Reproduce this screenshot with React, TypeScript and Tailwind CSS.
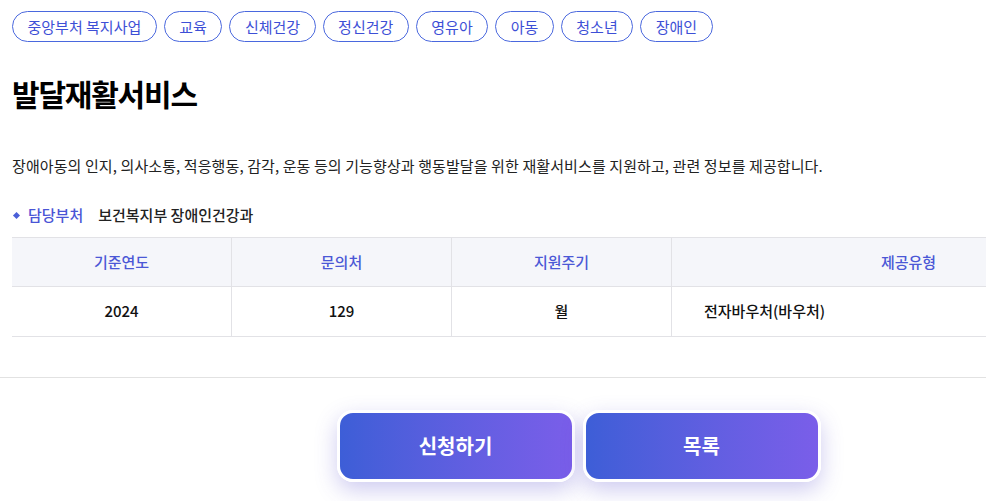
import React from 'react';

const tags = ['중앙부처 복지사업', '교육', '신체건강', '정신건강', '영유아', '아동', '청소년', '장애인'];

const columns = [
    { head: '기준연도', value: '2024', width: 'w-[220px]', align: 'text-center' },
    { head: '문의처', value: '129', width: 'w-[220px]', align: 'text-center' },
    { head: '지원주기', value: '월', width: 'w-[220px]', align: 'text-center' },
    { head: '제공유형', value: '전자바우처(바우처)', width: 'flex-1', align: 'text-left pl-[32px]' },
];

const App = () => {
    return (
        <div
            className="w-full min-h-screen overflow-hidden bg-white text-[#222]"
            style={{ fontFamily: '"Noto Sans CJK KR", "Noto Sans", sans-serif' }}
        >
            <div className="w-[1157px]">
                {/* Tags */}
                <div className="flex gap-[7px] px-[12px] pt-[11px]">
                    {tags.map((tag) => (
                        <span
                            key={tag}
                            className="h-[31px] px-[14.5px] flex items-center rounded-full border border-[#4a68de] text-[15px] text-[#3d4fd6] leading-none"
                        >
                            {tag}
                        </span>
                    ))}
                </div>

                {/* Title */}
                <h1 className="mt-[31px] px-[12px] h-[40px] flex items-center text-[30px] font-bold text-black tracking-[-1.2px]">
                    발달재활서비스
                </h1>

                {/* Description */}
                <p className="mt-[41px] px-[12px] h-[24px] flex items-center text-[15px] text-[#222] tracking-[0.1px]">
                    장애아동의 인지, 의사소통, 적응행동, 감각, 운동 등의 기능향상과 행동발달을 위한 재활서비스를 지원하고, 관련 정보를 제공합니다.
                </p>

                {/* Department */}
                <div className="mt-[25px] px-[12px] h-[24px] flex items-center">
                    <span className="ml-[2px] w-[5px] h-[5px] bg-[#4a5fd8] rotate-45" />
                    <span className="ml-[9px] text-[15px] font-medium text-[#4a55d6]">담당부처</span>
                    <span className="ml-[15px] text-[15px] font-medium text-[#222]">보건복지부 장애인건강과</span>
                </div>

                {/* Table */}
                <div className="mt-[10px] mx-[12px] border-t border-[#e2e2e6]">
                    <div className="flex h-[49px] bg-[#f5f6fa] border-b border-[#e2e2e6]">
                        {columns.map((c, i) => (
                            <div
                                key={c.head}
                                className={`${c.width} flex items-center justify-center text-[15px] font-medium text-[#4b58d6] ${i < 3 ? 'border-r border-[#e2e2e6]' : ''}`}
                            >
                                {c.head}
                            </div>
                        ))}
                    </div>
                    <div className="flex h-[50px] border-b border-[#e2e2e6]">
                        {columns.map((c, i) => (
                            <div
                                key={c.head}
                                className={`${c.width} ${c.align} flex items-center ${i < 3 ? 'justify-center border-r border-[#e2e2e6]' : ''} text-[15px] font-medium text-[#111]`}
                            >
                                {c.value}
                            </div>
                        ))}
                    </div>
                </div>

                <div className="mt-[40px] border-t border-[#e2e2e2]" />

                {/* Buttons */}
                <div className="mt-[32px] flex justify-center gap-[8px]">
                    <button className="w-[238px] h-[72px] rounded-[16px] border-[3px] border-white bg-gradient-to-r from-[#3d5ed7] to-[#7a5ee9] text-white text-[20px] font-bold shadow-[0_8px_22px_rgba(80,70,200,0.28)]">
                        신청하기
                    </button>
                    <button className="w-[238px] h-[72px] rounded-[16px] border-[3px] border-white bg-gradient-to-r from-[#3d5ed7] to-[#7a5ee9] text-white text-[20px] font-bold shadow-[0_8px_22px_rgba(80,70,200,0.28)]">
                        목록
                    </button>
                </div>
            </div>
        </div>
    );
};

export default App;
